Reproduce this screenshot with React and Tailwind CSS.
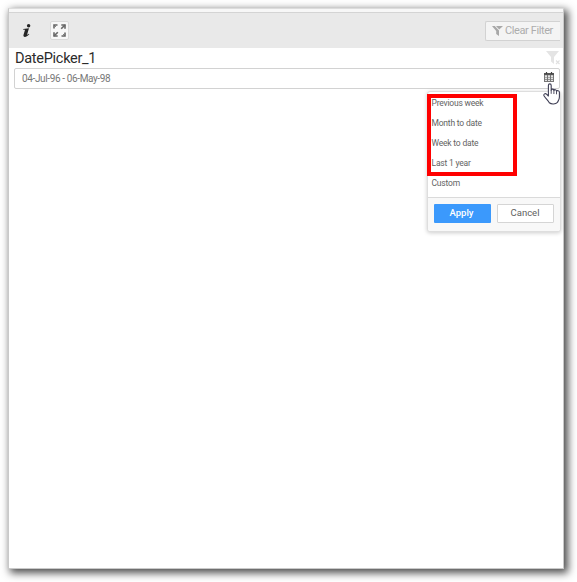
const ranges = ["Previous week", "Month to date", "Week to date", "Last 1 year", "Custom"];

function InfoIcon() {
  return (
    <svg width="10" height="13" viewBox="0 0 9 12" fill="#262626">
      <circle cx="6" cy="1.7" r="1.6" />
      <path d="M1.1 4.6L6.3 3.9L4.7 9.5C4.6 10 5 10 6.2 9L6.6 9.5C4.7 11.5 3.6 12 2.3 11.9C1.3 11.8 1 11.1 1.3 10L2.7 5.3L1 5.2Z" />
    </svg>
  );
}

function ExpandIcon() {
  return (
    <svg width="13" height="13" viewBox="0 0 13 13" fill="none" stroke="#666" strokeWidth="1.6">
      <path d="M1 4.5V1H4.5M8.3 1H12V4.7M12 8.5V12H8.5M4.7 12H1V8.3" />
      <path d="M12 1L8.2 4.8M1 12L4.8 8.2" />
      <path d="M1 1L2.8 2.8M12 12L10.2 10.2" strokeWidth="1" />
    </svg>
  );
}

function FilterOffIcon() {
  return (
    <svg width="11" height="10" viewBox="0 0 11 10" fill="#a8a8a8">
      <path d="M0 0H2.8L7 4.4V10L4.2 8V5Z" />
      <path d="M4 0H11L7.2 3.6Z" />
    </svg>
  );
}

function ClearFunnelIcon() {
  return (
    <svg width="15" height="15" viewBox="0 0 15 15" fill="#e4e4e4">
      <path d="M0 0H13L8 6V13L5 10.5V6Z" />
      <path d="M10 9.5L13.5 13M13.5 9.5L10 13" stroke="#e0e0e0" strokeWidth="1.1" />
    </svg>
  );
}

function CalendarIcon() {
  return (
    <svg className="mb-[3px]" width="10" height="10" viewBox="0 0 10 10">
      <path d="M0 1H10V10H0Z" fill="#777" />
      <path d="M0 1H10V3H0Z" fill="#555" />
      <path d="M2.5 0V2M7.5 0V2" stroke="#444" strokeWidth="1.2" />
      <path d="M1 3.3H3V5H1ZM4 3.3H6V5H4ZM7 3.3H9V5H7ZM1 5.6H3V7H1ZM4 5.6H6V7H4ZM7 5.6H9V7H7ZM1 7.7H3V9.1H1ZM4 7.7H6V9.1H4ZM7 7.7H9V9.1H7Z" fill="#e2e2e2" />
    </svg>
  );
}

function HandCursor() {
  return (
    <svg className="absolute left-[534px] top-[74px]" width="18" height="23" viewBox="0 0 18 23">
      <path
        d="M5.4 13V2.4C5.4 .4 8.2 .4 8.2 2.4V7.2C8.5 5.6 10.9 5.9 10.9 7.5C11.3 6.2 13.5 6.5 13.5 8.2C14 7.2 16.4 7.5 16.4 9.2V14C16.4 16.8 15 18 14.5 19.3C12.5 21.3 8.5 21.5 6.3 19.8C5.7 18 2.4 15.3 1 12.8C.3 11 2.3 10 3.5 11.1Z"
        fill="#fff"
        stroke="#3e3e54"
        strokeWidth="1.1"
        strokeLinejoin="round"
      />
      <path d="M8.2 7V10.8M10.9 7.5V11M13.5 8.2V11.3" stroke="#3e3e54" strokeWidth=".9" />
    </svg>
  );
}

export default function App() {
  return (
    <div className="h-[582px] w-[577px] overflow-hidden bg-white pl-2 pt-2 font-['Roboto',sans-serif]">
      <div className="relative h-[561px] w-[556px] border border-[#c9c9c9] border-t-[#dcdcdc] bg-white shadow-[3px_3px_8px_1px_rgba(0,0,0,0.7)]">
        <div className="h-1 border-b border-[#d4d4d4] bg-[#f7f7f7]" />
        <header className="flex h-[35px] items-center bg-[#e9e9e9] pl-[13px] pr-[3px]">
          <InfoIcon />
          <button className="ml-[18px] flex size-[19px] items-center justify-center rounded-[2px] border border-[#d9d9d9] bg-[#f7f7f7]">
            <ExpandIcon />
          </button>
          <button className="ml-auto flex h-5 w-[75px] items-center gap-[2px] whitespace-nowrap rounded-l-[2px] border border-r-0 border-[#d2d2d2] bg-[#f4f4f4] pl-[6px] text-[11px] text-[#adadad]">
            <FilterOffIcon />
            <span className="pt-px tracking-[-0.4px]">Clear Filter</span>
          </button>
        </header>
        <div className="flex h-5 justify-between pl-[6px] pr-[2px]">
          <h1 className="text-[14.5px] leading-[22px] tracking-[-0.28px] text-[#2b2b2b]">DatePicker_1</h1>
          <div className="pt-[3px]"><ClearFunnelIcon /></div>
        </div>
        <div className="ml-[5px] flex h-[21px] w-[546px] items-center justify-between rounded-[2px] border border-[#d2d2d2] pl-[7px] pr-[5px] text-[10px] text-[#777]">
          <span className="tracking-[-0.37px]">04-Jul-96 - 06-May-98</span>
          <CalendarIcon />
        </div>
        <div className="absolute left-[418px] top-[82px] w-[134px] rounded-[3px] border border-[#dedede] bg-white shadow-[0_1px_4px_rgba(0,0,0,0.2)]">
          <ul className="h-[105px] pt-px text-[8.5px] text-[#636363]">
            {ranges.map((range) => (
              <li key={range} className="h-5 pl-[3.5px] leading-5 tracking-[-0.2px]">{range}</li>
            ))}
          </ul>
          <footer className="flex h-[34px] gap-[6px] rounded-b-[3px] border-t border-[#dadada] bg-[#f8f8f8] px-[6px] pt-[6px] text-[9.5px]">
            <button className="h-[19px] w-[57px] rounded-[1px] bg-[#3b99fc] pr-[2px] font-medium text-white">Apply</button>
            <button className="h-[19px] w-[57px] rounded-[1px] border border-[#d5d5d5] bg-white pr-px text-[#606060]">Cancel</button>
          </footer>
        </div>
        <div className="absolute left-[418px] top-[85px] h-[82px] w-[90px] border-4 border-[#ff0000]" />
        <HandCursor />
      </div>
    </div>
  );
}
